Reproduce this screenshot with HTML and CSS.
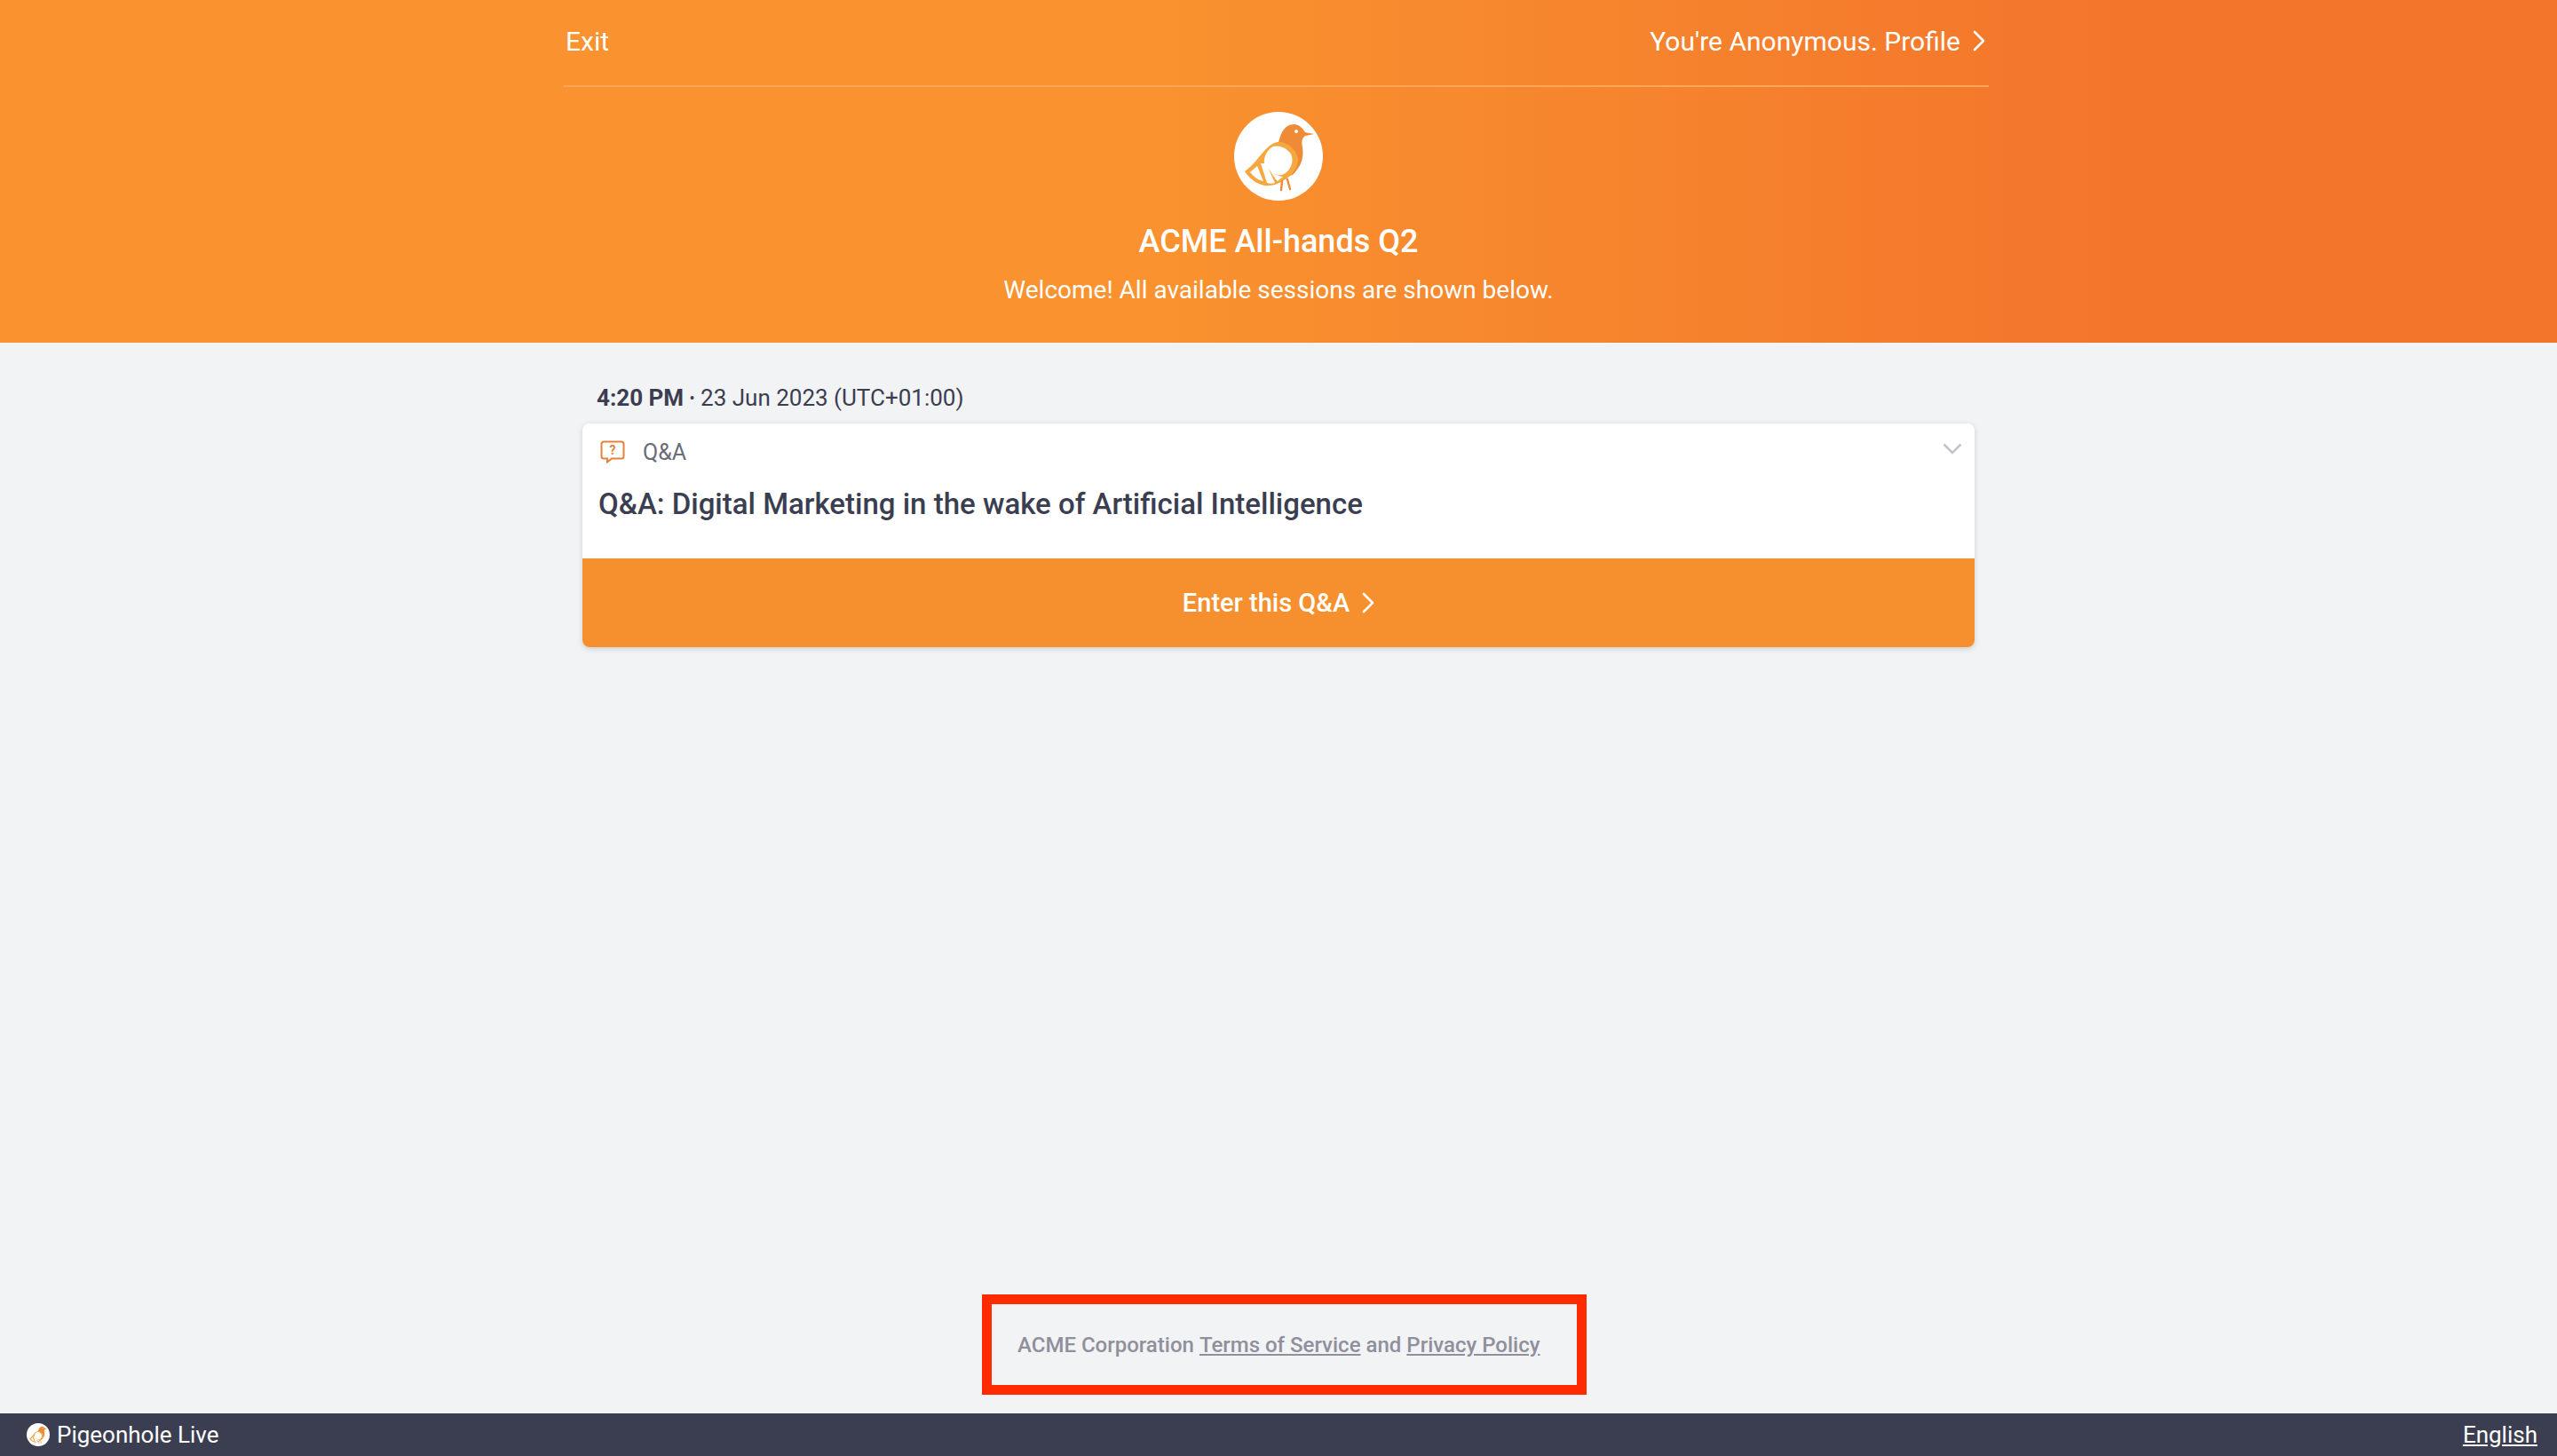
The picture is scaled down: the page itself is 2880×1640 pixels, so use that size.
FILE: index.html
```html
<!DOCTYPE html>
<html lang="en">
<head>
    <meta charset="UTF-8">
    <meta name="viewport" content="width=device-width, initial-scale=1.0">
    <title>ACME All-hands Q2</title>
    <link rel="stylesheet" href="styles.css">
</head>
<body>
    <svg class="defs" width="0" height="0">
        <symbol id="bird" viewBox="0 0 100 100">
            <circle cx="50" cy="50" r="50" fill="#fff"/>
            <path d="M51 31C53 23 58 14 67 14C73 14 77 18 80 23L90 25L80 27C76 30 76 34 77 40C79 52 75 62 66 71L52 74L48 40Z" fill="#ef8a37"/>
            <path d="M12 67C22 60 28 50 34 44C40 37 47 33 53 34C62 36 71 44 72 53C72 62 66 72 56 77C50 81 42 84 34 83C25 81 17 75 12 67Z" fill="#f5a842"/>
            <path d="M44 39C50 37 58 40 63 46C67 52 66 60 61 66C58 70 53 72 49 71C43 69 37 64 34 58C33 50 38 42 44 39Z" fill="#fff"/>
            <path d="M18 68L26 61L33 78C27 77 22 73 18 68ZM30 58L36 58L46 80C43 81 40 81 37 80ZM39 64C44 69 50 73 55 73L49 78C46 76 43 70 39 64Z" fill="#fff"/>
            <path d="M54 78L53 88M60 76L63 87" fill="none" stroke="#ef8a37" stroke-width="2.4" stroke-linecap="round"/>
            <circle cx="70" cy="22" r="2" fill="#fff"/>
        </symbol>
    </svg>

    <header class="hero">
        <nav class="topnav">
            <a class="nav-link">Exit</a>
            <a class="nav-link profile-link">You're Anonymous. Profile
                <svg class="chevron-right" viewBox="0 0 14 24"><path d="M2 2L12 12L2 22"/></svg>
            </a>
        </nav>
        <div class="event">
            <svg class="event-logo"><use href="#bird"/></svg>
            <h1>ACME All-hands Q2</h1>
            <p>Welcome! All available sessions are shown below.</p>
        </div>
    </header>

    <main class="content">
        <div class="session-time"><b>4:20 PM</b> <span class="dot">•</span> 23 Jun 2023 (UTC+01:00)</div>
        <section class="card">
            <div class="card-body">
                <div class="card-type">
                    <svg class="qna-icon" viewBox="0 0 28 26">
                        <path d="M4 1.5H24A2.5 2.5 0 0 1 26.500 4V18A2.500 2.500 0 0 1 24 20.500H13L8 24.500V20.500H4A2.500 2.500 0 0 1 1.500 18V4A2.500 2.500 0 0 1 4 1.500Z"/>
                        <text x="14" y="15.500">?</text>
                    </svg>
                    <span>Q&amp;A</span>
                    <svg class="chevron-down" viewBox="0 0 22 13"><path d="M1.500 1.500L11 11L20.500 1.500"/></svg>
                </div>
                <h2>Q&amp;A: Digital Marketing in the wake of Artificial Intelligence</h2>
            </div>
            <a class="enter-btn">Enter this Q&amp;A
                <svg class="chevron-right" viewBox="0 0 14 24"><path d="M2 2L12 12L2 22"/></svg>
            </a>
        </section>
    </main>

    <div class="terms">ACME Corporation <a>Terms of Service</a> and <a>Privacy Policy</a></div>

    <footer class="bottombar">
        <span class="brand"><svg class="brand-logo"><use href="#bird"/></svg>Pigeonhole Live</span>
        <a class="lang">English</a>
    </footer>
</body>
</html>
```

FILE: styles.css
```css
body {
    font-family: Roboto, sans-serif;
    margin: 0;
    min-height: 100vh;
    display: flex;
    flex-direction: column;
    background-color: #f2f3f5;
    color: #3b3e50;
}
.defs {
    position: absolute;
}
.hero {
    height: 386px;
    padding: 0 640px 0 635px;
    color: #fff;
    background: linear-gradient(90deg, #f9922f 0%, #f9922f 45%, #f3752b 83%, #f3752b 100%);
}
.topnav {
    height: 98px;
    display: flex;
    align-items: center;
    justify-content: space-between;
    border-bottom: 2px solid #fba556;
    font-size: 30px;
    padding-bottom: 4px;
    box-sizing: content-box;
    height: 92px;
    padding-left: 2px;
    padding-right: 4px;
}
.nav-link {
    display: flex;
    align-items: center;
}
.chevron-right {
    width: 14px;
    height: 24px;
    margin-left: 14px;
    fill: none;
    stroke: #fff;
    stroke-width: 2.6;
    stroke-linecap: round;
    stroke-linejoin: round;
}
.event {
    display: flex;
    flex-direction: column;
    align-items: center;
    margin-left: 5px;
}
.event-logo {
    width: 100px;
    height: 100px;
    margin-top: 28px;
}
.event h1 {
    font-size: 36px;
    font-weight: 500;
    line-height: 44px;
    margin: 24px 0 0;
}
.event p {
    font-size: 28px;
    line-height: 36px;
    margin: 15px 0 0;
}
.content {
    width: 1568px;
    margin: 0 auto;
    flex: 1;
}
.session-time {
    font-size: 26px;
    line-height: 32px;
    padding: 46px 0 12px 16px;
}
.session-time b {
    font-weight: 700;
}
.dot {
    font-size: 18px;
    vertical-align: 2px;
}
.card {
    background-color: #fff;
    border-radius: 8px;
    box-shadow: 0 2px 6px rgba(40, 44, 60, 0.18);
    overflow: hidden;
}
.card-body {
    height: 152px;
}
.card-type {
    display: flex;
    align-items: center;
    padding: 16px 14px 0 20px;
    font-size: 25px;
    color: #6a6c78;
    height: 32px;
}
.qna-icon {
    width: 28px;
    height: 26px;
    margin-right: 20px;
}
.qna-icon path {
    fill: none;
    stroke: #e5813a;
    stroke-width: 2;
}
.qna-icon text {
    font-size: 14px;
    font-weight: 700;
    text-anchor: middle;
    fill: #e5813a;
}
.chevron-down {
    width: 22px;
    height: 13px;
    margin-left: auto;
    margin-top: -8px;
    fill: none;
    stroke: #c3c4cb;
    stroke-width: 2.600;
}
.card-body h2 {
    font-size: 33px;
    font-weight: 500;
    line-height: 42px;
    margin: 22px 0 0 18px;
}
.enter-btn {
    height: 100px;
    background-color: #f6902f;
    color: #fff;
    font-size: 29px;
    font-weight: 500;
    display: flex;
    align-items: center;
    justify-content: center;
}
.terms {
    align-self: flex-start;
    margin: 0 0 21px 1106px;
    width: 681px;
    height: 113px;
    box-sizing: border-box;
    border: 11px solid #ff2a00;
    padding-left: 29px;
    display: flex;
    align-items: center;
    gap: 0.25em;
    font-size: 24px;
    font-weight: 500;
    color: #8f909b;
}
.terms a {
    text-decoration: underline;
}
.bottombar {
    height: 48px;
    flex-shrink: 0;
    background-color: #3b3e50;
    color: #fff;
    font-size: 26px;
    display: flex;
    align-items: center;
    justify-content: space-between;
    padding: 0 22px 0 30px;
}
.brand {
    display: flex;
    align-items: center;
}
.brand-logo {
    width: 26px;
    height: 26px;
    margin-right: 8px;
}
.lang {
    text-decoration: underline;
}
```
